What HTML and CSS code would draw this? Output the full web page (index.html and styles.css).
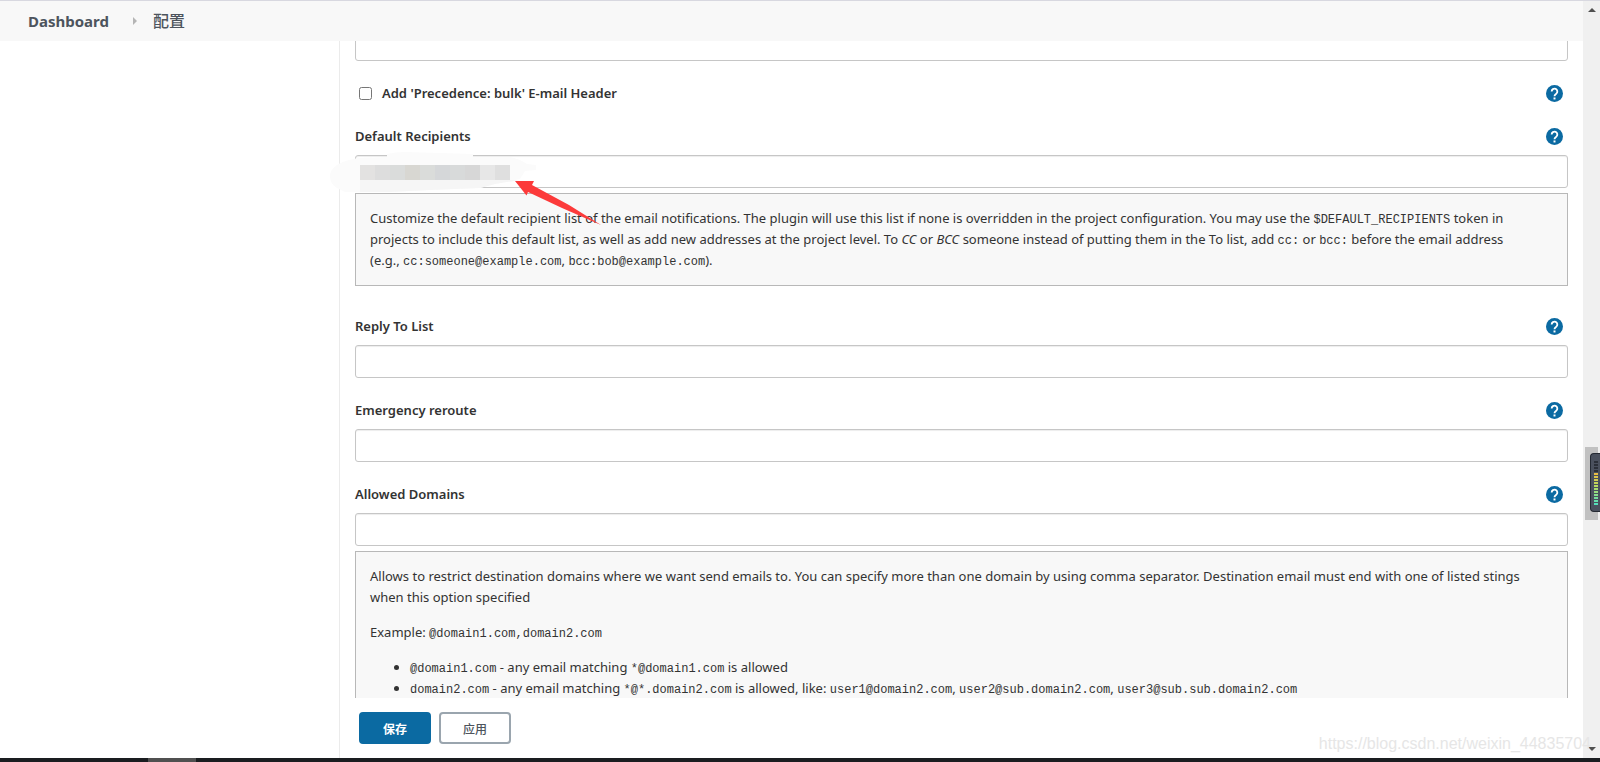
FILE: index.html
```html
<!DOCTYPE html>
<html lang="zh-CN">
<head>
<meta charset="utf-8">
<title>配置 [Jenkins]</title>
<link rel="stylesheet" href="styles.css">
</head>
<body>
<svg class="defs" aria-hidden="true">
  <symbol id="help" viewBox="0 0 24 24">
    <path fill="#0b6aa2" d="M12 0a12 12 0 1 0 0 24 12 12 0 0 0 0-24z"/>
    <path fill="none" stroke="#fff" stroke-width="2.6" d="M8 9.2a4 4 0 1 1 6.6 3C13 13.500 12 14 12 16"/>
    <path fill="#fff" d="M10.600 17.600h2.800v2.800h-2.800z"/>
  </symbol>
</svg>
<div class="window">
  <div class="page">
    <nav class="breadcrumbs">
      <a href="#">Dashboard</a>
      <svg class="crumb-arrow" viewBox="0 0 4 8" aria-hidden="true"><path d="M0 0l4 4-4 4z"/></svg>
      <a class="current" href="#">配置</a>
    </nav>
    <div class="columns">
      <aside class="side"></aside>
      <main class="main">
        <form class="form">
          <div class="fields">
            <input class="text first" type="text" aria-label="Default Content">
            <div class="row check-row">
              <label class="check"><input type="checkbox">Add 'Precedence: bulk' E-mail Header</label>
              <button class="help" type="button" aria-label="Help"><svg><use href="#help"/></svg></button>
            </div>
            <section class="field spaced">
              <div class="row">
                <label for="recipients">Default Recipients</label>
                <button class="help" type="button" aria-label="Help"><svg><use href="#help"/></svg></button>
              </div>
              <div class="entry">
                <input class="text" id="recipients" type="text">
                <svg class="redaction" viewBox="0 0 280 80" aria-hidden="true">
                  <path fill="#fbfbfb" d="M0 24C3 15 12 11 28 8L57 7V4Q65 2 75 2L110 3 143 4V7H180Q190 9 197 14L206 15V20L195 21 190 29 165 34 150 38 100 40 60 42H15L7 38C1 34 0 30 0 24z"/>
                  <path fill="#f6f6f6" d="M30 30H190L165 34 150 38 100 40 60 42H30z"/>
                  <path fill="#e3e2e1" d="M30 15h15v15H30z"/>
                  <path fill="#dddddd" d="M45 15h15v15H45z"/>
                  <path fill="#dadcdb" d="M60 15h15v15H60z"/>
                  <path fill="#d8d7d2" d="M75 15h15v15H75z"/>
                  <path fill="#dadcda" d="M90 15h15v15H90z"/>
                  <path fill="#d5d7d9" d="M105 15h15v15h-15z"/>
                  <path fill="#d8dada" d="M120 15h15v15h-15z"/>
                  <path fill="#d7d7d7" d="M135 15h15v15h-15z"/>
                  <path fill="#e7e7e7" d="M150 15h15v15h-15z"/>
                  <path fill="#dfdfdf" d="M165 15h15v15h-15z"/>
                  <path fill="#fc3a3a" d="M185 31L204 31 202 35 239 55 271 75 232 58 198 42 196.500 45.500z"/>
                </svg>
              </div>
              <div class="note">
                Customize the default recipient list of the email notifications. The plugin will use this list if none is overridden in the project configuration. You may use the <code>$DEFAULT_RECIPIENTS</code> token in projects to include this default list, as well as add new addresses at the project level. To <i>CC</i> or <i>BCC</i> someone instead of putting them in the To list, add <code>cc:</code> or <code>bcc:</code> before the email address <span class="keep">(e.g., <code>cc:someone@example.com</code></span>, <code>bcc:bob@example.com</code>).
              </div>
            </section>
            <section class="field">
              <div class="row">
                <label for="reply">Reply To List</label>
                <button class="help" type="button" aria-label="Help"><svg><use href="#help"/></svg></button>
              </div>
              <input class="text" id="reply" type="text">
            </section>
            <section class="field">
              <div class="row">
                <label for="reroute">Emergency reroute</label>
                <button class="help" type="button" aria-label="Help"><svg><use href="#help"/></svg></button>
              </div>
              <input class="text" id="reroute" type="text">
            </section>
            <section class="field">
              <div class="row">
                <label for="domains">Allowed Domains</label>
                <button class="help" type="button" aria-label="Help"><svg><use href="#help"/></svg></button>
              </div>
              <input class="text" id="domains" type="text">
              <div class="note">
                <p>Allows to restrict destination domains where we want send emails to. You can specify more than one domain by using comma separator. Destination email must end with one of listed stings when this option specified</p>
                <p>Example: <code>@domain1.com,domain2.com</code></p>
                <ul>
                  <li><code>@domain1.com</code> - any email matching <code>*@domain1.com</code> is allowed</li>
                  <li><code>domain2.com</code> - any email matching <code>*@*.domain2.com</code> is allowed, like: <code>user1@domain2.com</code>, <code>user2@sub.domain2.com</code>, <code>user3@sub.sub.domain2.com</code></li>
                </ul>
              </div>
            </section>
          </div>
          <div class="actions">
            <button class="btn primary" type="submit">保存</button>
            <button class="btn" type="button">应用</button>
          </div>
        </form>
      </main>
    </div>
  </div>
  <div class="scrollbar">
    <svg class="arrow" viewBox="0 0 8 4" aria-hidden="true"><path d="M0 4l4-4 4 4z"/></svg>
    <div class="thumb"></div>
    <svg class="arrow" viewBox="0 0 8 4" aria-hidden="true"><path d="M0 0h8L4 4z"/></svg>
  </div>
  <div class="meter"><div class="bars"></div></div>
  <div class="watermark">https://blog.csdn.net/weixin_44835704</div>
</div>
<div class="taskbar"><div class="task"></div></div>
</body>
</html>
```

FILE: styles.css
```css
* { box-sizing: border-box; }

body {
  margin: 0;
  height: 100vh;
  display: flex;
  flex-direction: column;
  overflow: hidden;
  background: #fff;
  color: #333;
  font: 13px/21px "Noto Sans", "Noto Sans CJK SC", sans-serif;
}

.defs { display: none; }

.window {
  position: relative;
  flex: 1;
  min-height: 0;
  display: flex;
  border-top: 1px solid #d8d8e0;
}

.page {
  flex: 1;
  min-width: 0;
  display: flex;
  flex-direction: column;
}

.breadcrumbs {
  flex: none;
  display: flex;
  align-items: center;
  height: 40px;
  padding-left: 28px;
  background: #f8f8f8;
  font-size: 15px;
}

.breadcrumbs a {
  color: #4d545d;
  font-weight: 700;
  text-decoration: none;
}

.breadcrumbs .current { font-size: 16px; font-weight: 500; }

.crumb-arrow {
  width: 4px;
  height: 8px;
  margin: 0 16px 0 24px;
  fill: #b5b5b5;
}

.columns { flex: 1; min-height: 0; display: flex; }

.side { flex: none; width: 340px; border-right: 1px solid #ebebeb; }

.main { flex: 1; min-width: 0; display: flex; }

.form { flex: 1; min-width: 0; display: flex; flex-direction: column; }

.fields {
  flex: 1;
  min-height: 0;
  overflow-x: visible;
  overflow-y: clip;
  padding: 0 15px;
}

.text {
  display: block;
  width: 100%;
  height: 33px;
  padding: 6px;
  border: 1px solid #c6c6c6;
  border-radius: 3px;
  background: #fff;
  box-shadow: inset 0 1px 1px rgba(0, 0, 0, 0.075);
  font: inherit;
}

.first { margin-top: -13px; }

.row {
  display: flex;
  align-items: center;
  justify-content: space-between;
  height: 21px;
  padding-right: 5px;
  font-weight: 600;
}

.check-row { margin-top: 22px; }

.check { display: flex; align-items: center; gap: 10px; }

.check input { width: 13px; height: 13px; margin: 0 0 0 4px; }

.help {
  width: 17px;
  height: 17px;
  padding: 0;
  border: 0;
  background: none;
}

.help svg { display: block; width: 17px; height: 17px; }

.field { margin-top: 22px; }

.field .row { margin-bottom: 8px; }

.spaced { margin-bottom: 30px; }

.entry { position: relative; }

.redaction {
  position: absolute;
  left: -25px;
  top: -5px;
  width: 280px;
  height: 80px;
  z-index: 1;
}

.note {
  margin-top: 5px;
  padding: 14px;
  border: 1px solid #b8b8b8;
  background: #f8f8f8;
}

.note p { margin: 0 0 14px; }

.note ul { margin: 0; padding-left: 40px; }

.keep { white-space: nowrap; }

code { font: 12px/14px "Liberation Mono", monospace; }

.actions {
  flex: none;
  display: flex;
  gap: 8px;
  height: 60px;
  padding: 14px 19px;
}

.btn {
  width: 72px;
  height: 32px;
  padding: 0;
  border: 2px solid #9aa5ae;
  border-radius: 4px;
  background: #fff;
  color: #4d545d;
  font: 500 12px "Noto Sans CJK SC", sans-serif;
}

.primary {
  border-color: #0b6aa2;
  background: #0b6aa2;
  color: #fff;
  font-weight: 700;
}

.scrollbar {
  flex: none;
  width: 17px;
  display: flex;
  flex-direction: column;
  align-items: center;
  padding: 7px 0;
  background: #f0f0f0;
}

.arrow { flex: none; width: 8px; height: 4px; fill: #505050; }

.thumb {
  width: 13px;
  height: 73px;
  margin: 435px 0 auto;
  background: #c1c1c1;
}

.meter {
  position: absolute;
  right: 0;
  top: 452px;
  width: 10px;
  height: 59px;
  padding: 6px 2px 6px 3px;
  border: 1px solid #252a33;
  border-right: 0;
  border-radius: 4px 0 0 4px;
  background: #4a505d;
}

.bars {
  height: 100%;
  background:
    repeating-linear-gradient(#4a505d 0 1px, transparent 1px 3px),
    linear-gradient(#2b2f38 0 12px, #f0b840 12px, #b8dc60 26px, #50e0c0);
}

.watermark {
  position: absolute;
  right: 9px;
  bottom: 4px;
  color: #e6e6e6;
  font: 16px/21px "Liberation Sans", Arial, sans-serif;
}

.taskbar { flex: none; height: 4px; padding-left: 148px; background: #1a1d20; }

.task { width: 48px; height: 4px; background: #505050; }
```
